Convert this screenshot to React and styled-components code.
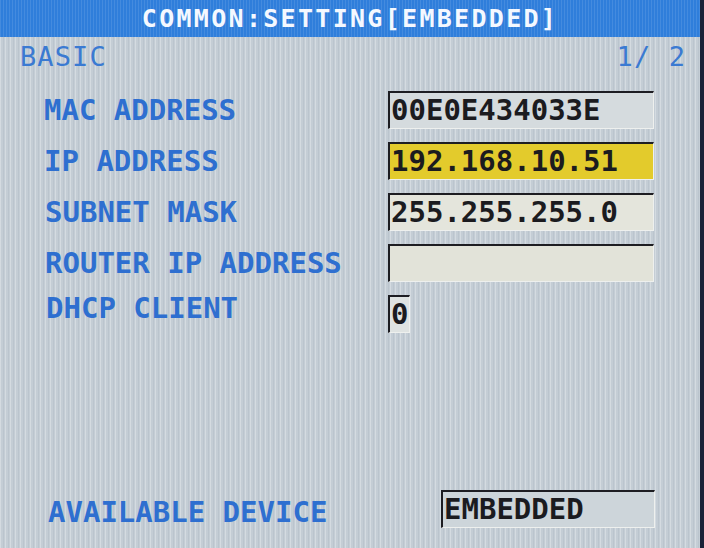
import React from 'react';
import styled, { createGlobalStyle } from 'styled-components';

const GlobalStyle = createGlobalStyle`
  html, body {
    margin: 0;
    padding: 0;
    background: #c4cdd5;
  }
`;

const Screen = styled.div`
  width: 704px;
  height: 548px;
  box-sizing: border-box;
  display: flex;
  flex-direction: column;
  border-right: 4px solid #1b2138;
  font-family: 'DejaVu Sans Mono', 'Liberation Mono', monospace;
  background-color: #c4cdd5;
  background-image: repeating-linear-gradient(
    90deg,
    rgba(255, 255, 255, 0.28) 0 1px,
    transparent 1px 3px,
    rgba(120, 135, 150, 0.12) 3px 4px,
    transparent 4px 5px
  );
  overflow: hidden;
`;

const TitleBar = styled.header`
  height: 37px;
  flex: none;
  display: flex;
  align-items: center;
  justify-content: center;
  background-color: #2f7edb;
  background-image: repeating-linear-gradient(
    90deg,
    rgba(255, 255, 255, 0.1) 0 1px,
    transparent 1px 3px
  );
  color: #f4f8ff;
  font-weight: bold;
  font-size: 25px;
  letter-spacing: 2.3px;
`;

const SubHeader = styled.div`
  height: 38px;
  flex: none;
  display: flex;
  align-items: center;
  justify-content: space-between;
  padding: 0 14px 0 20px;
  color: #3a7ad2;
  font-size: 27px;
  letter-spacing: 1.1px;
`;

const Rows = styled.div`
  display: grid;
  grid-template-columns: 344px 266px;
  grid-auto-rows: 38px;
  row-gap: 13px;
  padding: 16px 0 0 44px;
  align-items: center;
`;

const Label = styled.div`
  color: #2e6fd0;
  font-size: 29px;
  font-weight: bold;
  line-height: 1;
  padding-left: ${p => p.$shift || 0}px;
  margin-bottom: ${p => p.$lift || 0}px;
`;

const Field = styled.div`
  height: ${p => p.$h || 38}px;
  width: ${p => p.$w ? `${p.$w}px` : 'auto'};
  box-sizing: border-box;
  display: flex;
  align-items: center;
  padding-left: 1px;
  background: ${p => p.$bg || '#d6dcdf'};
  border-top: 2px solid #1d1d22;
  border-left: 2px solid #1d1d22;
  border-right: 1px solid #eef0ee;
  border-bottom: 1px solid #eef0ee;
  color: #1b1b1f;
  font-size: 29px;
  font-weight: bold;
  line-height: 1;
  white-space: nowrap;
  overflow: hidden;
`;

const Spacer = styled.div`
  flex: 1;
`;

const Footer = styled.div`
  display: grid;
  grid-template-columns: 393px 214px;
  align-items: center;
  padding: 0 0 20px 48px;
`;

const rows = [
  { label: 'MAC ADDRESS', value: '00E0E434033E', bg: '#d5dbde' },
  { label: 'IP ADDRESS', value: '192.168.10.51', bg: '#e3cb2c' },
  { label: 'SUBNET MASK', value: '255.255.255.0', bg: '#e4e5dc', shift: 1 },
  { label: 'ROUTER IP ADDRESS', value: '', bg: '#e2e3d9', shift: 1 },
  { label: 'DHCP CLIENT', value: '0', bg: '#dfe3e2', shift: 2, w: 22, lift: 12 }
];

export default function App() {
  return (
    <>
      <GlobalStyle />
      <Screen>
        <TitleBar>COMMON:SETTING[EMBEDDED]</TitleBar>
        <SubHeader>
          <span>BASIC</span>
          <span>1/ 2</span>
        </SubHeader>
        <Rows>
          {rows.map(r => (
            <React.Fragment key={r.label}>
              <Label $shift={r.shift} $lift={r.lift}>{r.label}</Label>
              <Field $bg={r.bg} $w={r.w}>{r.value}</Field>
            </React.Fragment>
          ))}
        </Rows>
        <Spacer />
        <Footer>
          <Label $lift={-6}>AVAILABLE DEVICE</Label>
          <Field $bg="#cdd5da">EMBEDDED</Field>
        </Footer>
      </Screen>
    </>
  );
}
